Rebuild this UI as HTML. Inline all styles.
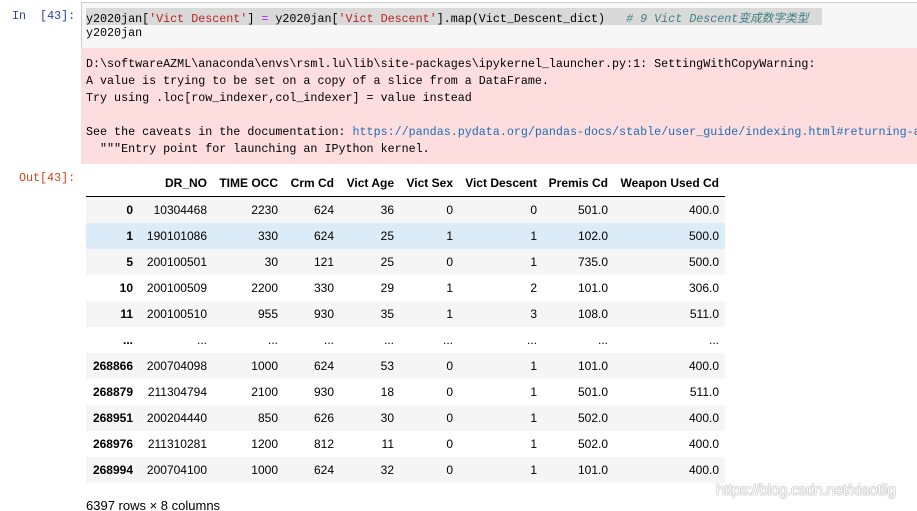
<!DOCTYPE html>
<html><head><meta charset="utf-8"><style>
html,body{margin:0;width:917px;height:511px;overflow:hidden}
body{background:#fff;position:relative;font-family:"Liberation Sans",Arial,sans-serif}
.mono{font-family:"Liberation Mono","Noto Sans CJK SC",monospace;font-size:11.7px;white-space:pre;position:absolute}
.prompt{position:absolute;font-family:"Liberation Mono",monospace;font-size:11.7px;white-space:pre}
#code{position:absolute;left:81px;top:2px;width:835px;height:45px;background:#f7f7f7;border:1px solid #cfcfcf;border-right:none}
#hl{position:absolute;left:86px;top:8px;width:736px;height:17px;background:#d9d9d9}
#err{position:absolute;left:81px;top:48px;width:836px;height:116px;background:#fddddd;overflow:hidden}
table{position:absolute;left:86px;top:170px;border-collapse:collapse;table-layout:fixed;font-size:12px;color:#000}
td,th{text-align:right;padding:0 6px 0 0;height:26px;white-space:nowrap;overflow:visible}
th{font-weight:bold}
thead th{height:26px;border-bottom:1px solid #000}
tbody tr:nth-child(odd){background:#f5f5f5}
tbody tr.hv{background:#dcebf8}
</style></head><body>
<div class="prompt" style="left:12px;top:9px;color:#303f9f">In  [43]:</div>
<div id="code"></div><div id="hl"></div>
<div class="mono" style="left:86px;top:9px;color:#000">y2020jan[<span style="color:#b22">'Vict Descent'</span>] <span style="color:#a2f">=</span> y2020jan[<span style="color:#b22">'Vict Descent'</span>].map(Vict_Descent_dict)   <i style="color:#408080"># 9 Vict Descent变成数字类型</i></div>
<div class="mono" style="left:86px;top:26px">y2020jan</div>
<div id="err"><div class="mono" style="left:5px;top:8px;line-height:17px">D:\softwareAZML\anaconda\envs\rsml.lu\lib\site-packages\ipykernel_launcher.py:1: SettingWithCopyWarning:
A value is trying to be set on a copy of a slice from a DataFrame.
Try using .loc[row_indexer,col_indexer] = value instead

See the caveats in the documentation: <span style="color:#1d6fb8">https://pandas.pydata.org/pandas-docs/stable/user_guide/indexing.html#returning-a-view-versus-a-copy</span>
  """Entry point for launching an IPython kernel.</div></div>
<div class="prompt" style="left:19px;top:171px;color:#d84315">Out[43]:</div>
<table>
<colgroup><col style="width:53px"><col style="width:74px"><col style="width:71px"><col style="width:56px"><col style="width:60px"><col style="width:59px"><col style="width:84px"><col style="width:71px"><col style="width:111px"></colgroup>
<thead><tr><th></th><th>DR_NO</th><th>TIME OCC</th><th>Crm Cd</th><th>Vict Age</th><th>Vict Sex</th><th>Vict Descent</th><th>Premis Cd</th><th>Weapon Used Cd</th></tr></thead>
<tbody>
<tr><th>0</th><td>10304468</td><td>2230</td><td>624</td><td>36</td><td>0</td><td>0</td><td>501.0</td><td>400.0</td></tr>
<tr class="hv"><th>1</th><td>190101086</td><td>330</td><td>624</td><td>25</td><td>1</td><td>1</td><td>102.0</td><td>500.0</td></tr>
<tr><th>5</th><td>200100501</td><td>30</td><td>121</td><td>25</td><td>0</td><td>1</td><td>735.0</td><td>500.0</td></tr>
<tr><th>10</th><td>200100509</td><td>2200</td><td>330</td><td>29</td><td>1</td><td>2</td><td>101.0</td><td>306.0</td></tr>
<tr><th>11</th><td>200100510</td><td>955</td><td>930</td><td>35</td><td>1</td><td>3</td><td>108.0</td><td>511.0</td></tr>
<tr><th>...</th><td>...</td><td>...</td><td>...</td><td>...</td><td>...</td><td>...</td><td>...</td><td>...</td></tr>
<tr><th>268866</th><td>200704098</td><td>1000</td><td>624</td><td>53</td><td>0</td><td>1</td><td>101.0</td><td>400.0</td></tr>
<tr><th>268879</th><td>211304794</td><td>2100</td><td>930</td><td>18</td><td>0</td><td>1</td><td>501.0</td><td>511.0</td></tr>
<tr><th>268951</th><td>200204440</td><td>850</td><td>626</td><td>30</td><td>0</td><td>1</td><td>502.0</td><td>400.0</td></tr>
<tr><th>268976</th><td>211310281</td><td>1200</td><td>812</td><td>11</td><td>0</td><td>1</td><td>502.0</td><td>400.0</td></tr>
<tr><th>268994</th><td>200704100</td><td>1000</td><td>624</td><td>32</td><td>0</td><td>1</td><td>101.0</td><td>400.0</td></tr>
</tbody></table>
<div style="position:absolute;left:86px;top:498px;font-size:13px;color:#000">6397 rows × 8 columns</div>
<div style="position:absolute;left:716px;top:482px;font-size:16px;letter-spacing:-0.6px;color:#fff;text-shadow:0 0 1px #888,0 0 1px #888">https://blog.csdn.net/xiaotiig</div>
</body></html>
